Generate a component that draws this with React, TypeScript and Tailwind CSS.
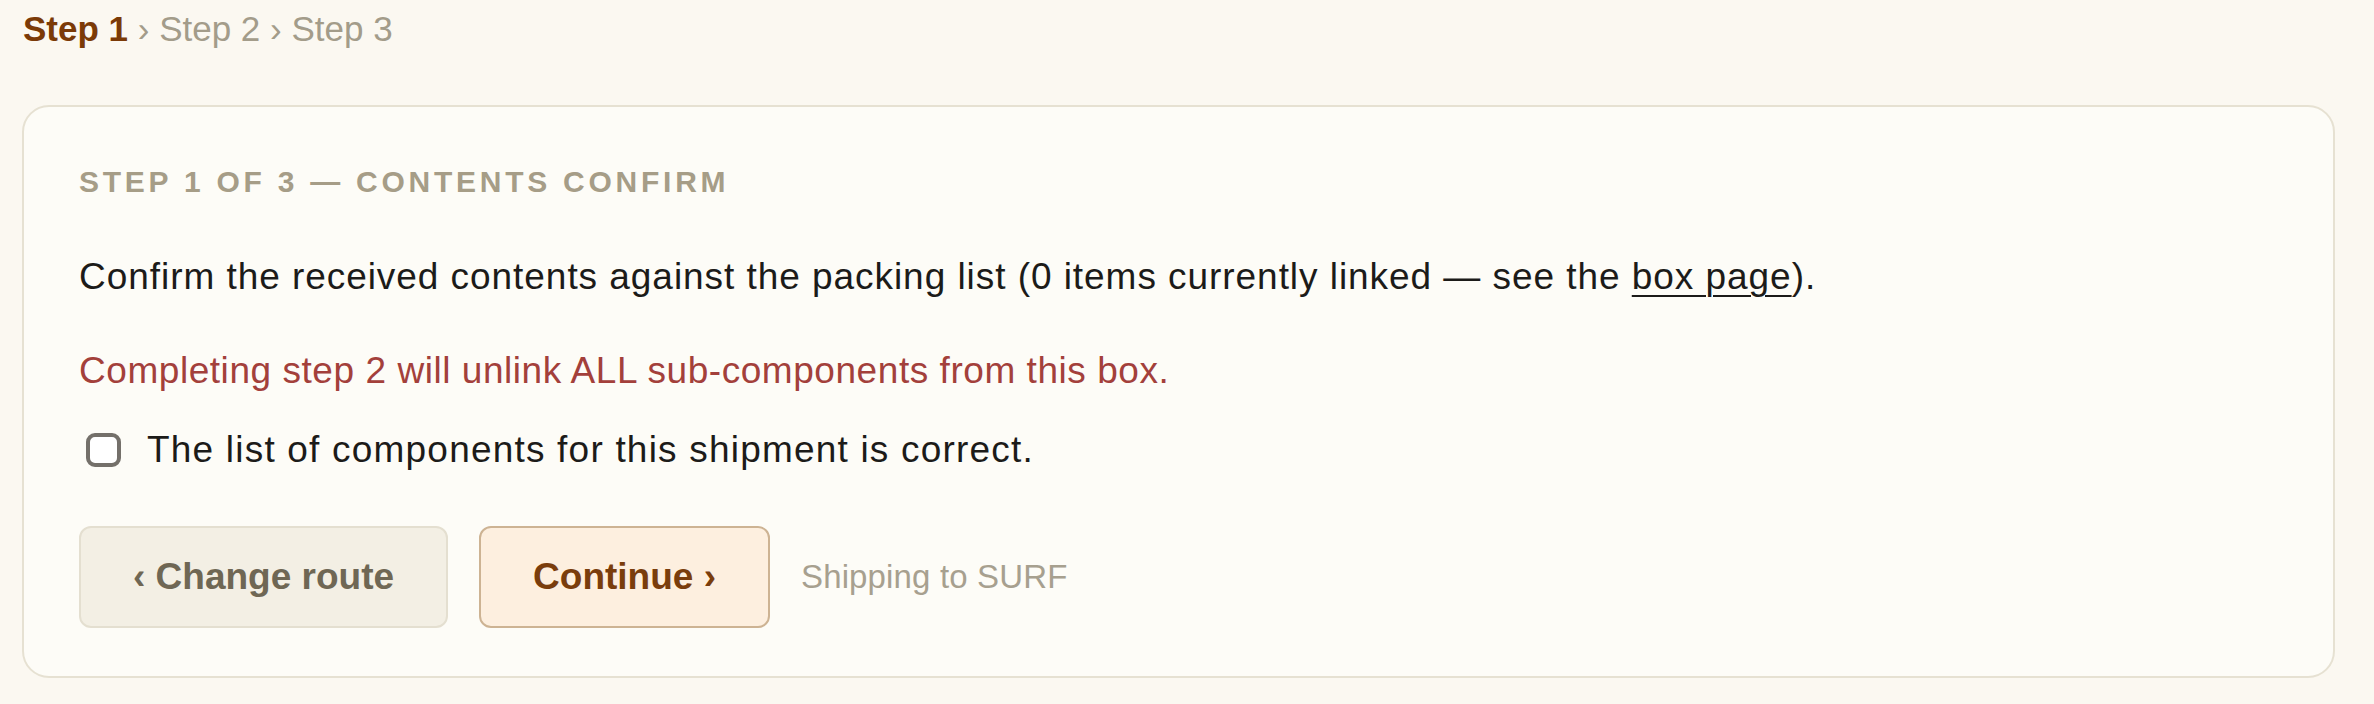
import React from "react";

const App: React.FC = () => {
  return (
    <div className="min-h-[704px] bg-[#fbf8f1] pl-[22px] pr-[39px] pb-[27px] font-['Liberation_Sans',Arial,sans-serif]">
      {/* Breadcrumb */}
      <div className="pt-[11px] pl-px text-[35px] leading-none text-[#a39c8a]">
        <span className="font-bold text-[#7b3a07]">Step 1</span> › Step 2 › Step 3
      </div>

      {/* Card */}
      <div className="mt-[59px] rounded-[27px] border-2 border-[#e6e1d2] bg-[#fdfcf7] pl-[55px] pr-[55px] pt-[60px] pb-[48px]">
        <div className="text-[30px] leading-[30px] font-bold uppercase tracking-[0.125em] text-[#a69d87]">
          Step 1 of 3 — Contents confirm
        </div>

        <p className="mt-[52px] text-[37px] leading-[56px] tracking-[0.95px] text-[#1c1b19]">
          Confirm the received contents against the packing list (0 items currently linked — see the{" "}
          <a href="#box" className="underline decoration-[2px] underline-offset-[6px]">
            box page
          </a>
          ).
        </p>

        <p className="mt-[38px] text-[37px] leading-[56px] tracking-[0.55px] text-[#a3403b]">
          Completing step 2 will unlink ALL sub-components from this box.
        </p>

        <label className="mt-[23px] flex items-center gap-[26px] text-[37px] leading-[56px] tracking-[1.2px] text-[#1c1b19]">
          <span className="ml-[7px] block h-[34px] w-[35px] rounded-[9px] border-[4px] border-[#74706a] bg-white" />
          The list of components for this shipment is correct.
        </label>

        {/* Actions */}
        <div className="mt-[48px] flex items-center gap-[31px]">
          <button className="rounded-[12px] border-2 border-[#e4dfd0] bg-[#f3efe4] px-[52px] py-[21px] text-[37px] leading-[56px] font-bold text-[#6f6754]">
            ‹ Change route
          </button>
          <button className="rounded-[12px] border-2 border-[#cdb393] bg-[#fdefdf] px-[52px] py-[21px] text-[37px] leading-[56px] font-bold text-[#7a3d0c]">
            Continue ›
          </button>
          <span className="text-[33px] tracking-[0.15px] text-[#a7a08f]">Shipping to SURF</span>
        </div>
      </div>
    </div>
  );
};

export default App;
